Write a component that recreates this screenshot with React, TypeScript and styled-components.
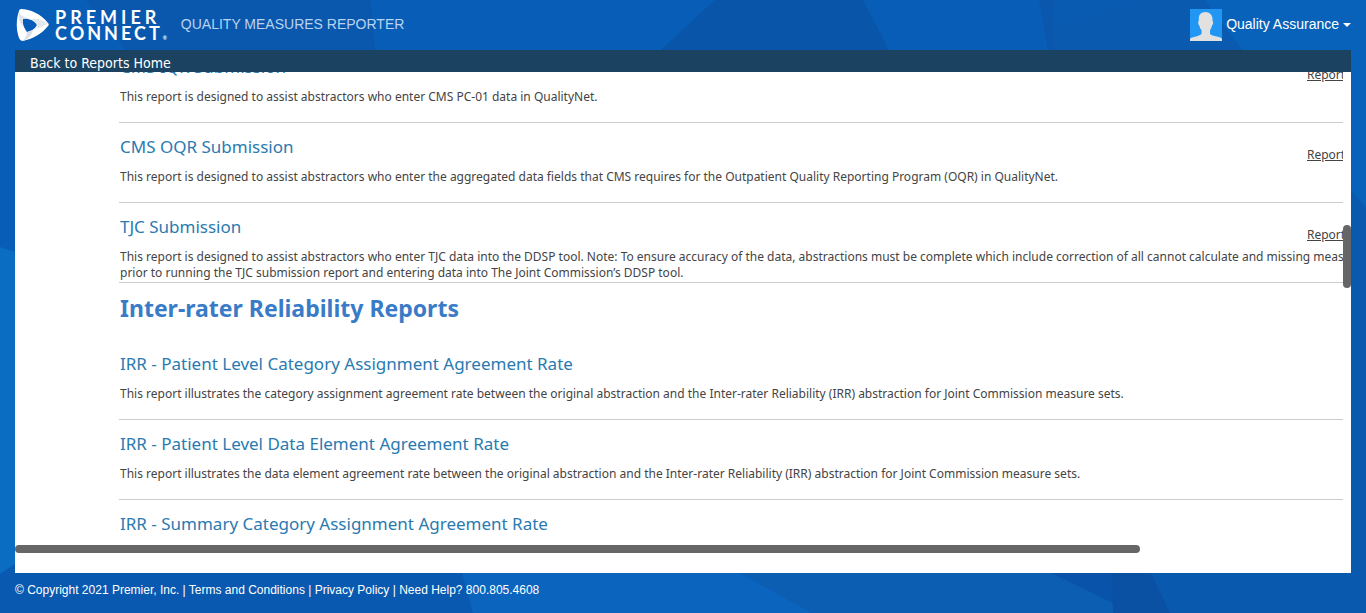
import React from "react";
import styled, { createGlobalStyle } from "styled-components";

const tahoma = `Tahoma, "Noto Sans", sans-serif`;
const arial = `Arial, "Liberation Sans", sans-serif`;

const GlobalStyle = createGlobalStyle`
  *, *::before, *::after { box-sizing: border-box; }
  body { margin: 0; background: #095db6; font-family: ${arial}; }
  h1, h2, h3, p, ul { margin: 0; padding: 0; }
`;

const Page = styled.div`
  position: relative;
  display: flex;
  flex-direction: column;
  height: 100vh;
  min-height: 300px;
  overflow: hidden;
`;

const Backdrop = styled.svg`
  position: absolute;
  inset: 0;
  z-index: -1;
  width: 100%;
  height: 100%;
`;

const Header = styled.header`
  display: flex;
  align-items: center;
  justify-content: space-between;
  height: 50px;
  flex: none;
  padding: 0 15px 0 16px;
`;

const Brand = styled.div`
  display: flex;
  align-items: center;
  gap: 14px;
`;

const Logo = styled.a`
  display: flex;
  align-items: center;
  gap: 6px;
  color: #fff;
  text-decoration: none;
`;

const Wordmark = styled.span`
  display: flex;
  flex-direction: column;
  font: 700 18px/16px Lato, sans-serif;
`;

const WordmarkLine = styled.span<{ $tracking: number }>`
  letter-spacing: ${(p) => p.$tracking}px;
`;

const Registered = styled.small`
  font-size: 5px;
  line-height: 5px;
  letter-spacing: 0;
`;

const AppName = styled.h1`
  padding-bottom: 2px;
  color: #b9d3ee;
  font: 400 14px/20px ${arial};
`;

const UserButton = styled.button`
  display: flex;
  align-items: center;
  gap: 4px;
  padding: 0;
  border: 0;
  background: none;
  color: #fff;
  font: 400 14px/20px ${arial};
  cursor: pointer;
`;

const UserName = styled.span`
  padding-bottom: 2px;
`;

const Caret = styled.span`
  border: 4px solid transparent;
  border-top-color: #fff;
  border-bottom: 0;
`;

const Panel = styled.main`
  display: flex;
  flex-direction: column;
  flex: 1;
  min-height: 0;
  margin: 0 15px;
  padding-bottom: 20px;
  background: #fff;
`;

const BackBar = styled.nav`
  display: flex;
  align-items: flex-end;
  flex: none;
  height: 22px;
  padding: 0 15px;
  background: #1c4262;
`;

const BackLink = styled.a`
  color: #fff;
  font: 400 14px/18px Tahoma, "DejaVu Sans Condensed", sans-serif;
  text-decoration: none;
`;

const ScrollArea = styled.div`
  display: flex;
  flex: 1;
  min-height: 0;
`;

const Viewport = styled.div`
  flex: 1;
  min-width: 0;
  overflow: hidden;
`;

const Content = styled.div`
  width: calc(100% + 239px);
  margin-top: -29px;
  padding-left: 104px;
  font-family: ${tahoma};
`;

const SectionTitle = styled.h2`
  padding: 9px 1px 16px;
  color: #3a7bc8;
  font: 700 23px/32px ${tahoma};
`;

const Row = styled.li`
  display: grid;
  grid-template-columns: minmax(0, 1fr) 275px;
  grid-template-rows: 27px auto;
  row-gap: 6px;
  align-content: start;
  min-height: 80px;
  padding: 13px 0 0 1px;
  border-bottom: 1px solid #ccc;
  list-style: none;
`;

const RowTitle = styled.h3`
  color: #2a7ab0;
  font: 400 17px/22px ${tahoma};
`;

const ReportLink = styled.a`
  align-self: end;
  justify-self: start;
  color: #444;
  font-size: 12px;
  line-height: 16px;
`;

const Description = styled.p`
  grid-column: 1 / -1;
  color: #444;
  font-size: 12px;
  line-height: 16px;
  white-space: pre-line;
`;

const VerticalTrack = styled.div`
  flex: none;
  width: 8px;
`;

const HorizontalTrack = styled.div`
  flex: none;
  height: 8px;
`;

const VerticalThumb = styled.div`
  height: 63px;
  margin-top: 153px;
  border-radius: 4px;
  background: #666;
`;

const HorizontalThumb = styled.div`
  width: calc(100% - 211px);
  height: 8px;
  border-radius: 4px;
  background: #666;
`;

const Footer = styled.footer`
  flex: none;
  height: 40px;
  padding: 9px 15px;
  color: #fff;
  font: 400 12px/16px ${arial};
`;

const FooterLink = styled.a`
  color: inherit;
  text-decoration: none;
`;

type Report = { title: string; text: string };

const submissionReports: Report[] = [
  {
    title: "CMS IQR Submission",
    text: "This report is designed to assist abstractors who enter CMS PC-01 data in QualityNet.",
  },
  {
    title: "CMS OQR Submission",
    text: "This report is designed to assist abstractors who enter the aggregated data fields that CMS requires for the Outpatient Quality Reporting Program (OQR) in QualityNet.",
  },
  {
    title: "TJC Submission",
    text: "This report is designed to assist abstractors who enter TJC data into the DDSP tool. Note: To ensure accuracy of the data, abstractions must be complete which include correction of all cannot calculate and missing measures\nprior to running the TJC submission report and entering data into The Joint Commission’s DDSP tool.",
  },
];

const reliabilityReports: Report[] = [
  {
    title: "IRR - Patient Level Category Assignment Agreement Rate",
    text: "This report illustrates the category assignment agreement rate between the original abstraction and the Inter-rater Reliability (IRR) abstraction for Joint Commission measure sets.",
  },
  {
    title: "IRR - Patient Level Data Element Agreement Rate",
    text: "This report illustrates the data element agreement rate between the original abstraction and the Inter-rater Reliability (IRR) abstraction for Joint Commission measure sets.",
  },
  { title: "IRR - Summary Category Assignment Agreement Rate", text: "" },
];

function ReportList({ reports, linked }: { reports: Report[]; linked?: boolean }) {
  return (
    <ul>
      {reports.map((report) => (
        <Row key={report.title}>
          <RowTitle>{report.title}</RowTitle>
          {linked ? <ReportLink href="#report">Report</ReportLink> : <span />}
          {report.text && <Description>{report.text}</Description>}
        </Row>
      ))}
    </ul>
  );
}

function Facets() {
  return (
    <Backdrop viewBox="0 0 1366 613" preserveAspectRatio="none" aria-hidden="true">
      <rect width="1366" height="613" fill="#085db6" />
      <path d="M86 0H371L375 50H126Z" fill="#0a58ae" />
      <path d="M715 0H863L889 50H661Z" fill="#0955a9" />
      <path d="M1039 0H1054V50H1048Z" fill="#0a57ad" />
      <path d="M1054 0H1205L1242 50H1054Z" fill="#095bb2" />
      <path d="M1054 28L1140 0H1205L1242 50H1054Z" fill="#0a5ab0" />
      <path d="M1205 0H1366V208L1351 190L1242 50Z" fill="#0862ba" />
      <path d="M1351 190L1366 208V613H1351Z" fill="#0959af" />
      <path d="M0 247L15 252V564L0 574Z" fill="#0b6dc2" />
      <path d="M0 574L15 564V573H462L473 613H0Z" fill="#0959b1" />
      <path d="M462 573H740L812 613H473Z" fill="#0b65bf" />
      <path d="M740 573H1051L1133 613H812Z" fill="#0b5eb2" />
      <path d="M1051 573H1112L1113 603Z" fill="#0954aa" />
      <path d="M1112 573H1151L1170 613H1113Z" fill="#0a50a3" />
      <path d="M1151 573H1366V613H1170Z" fill="#0959af" />
    </Backdrop>
  );
}

function PremierMark() {
  return (
    <svg width="33" height="34" viewBox="0 0 33 34" aria-hidden="true">
      <path
        fillRule="evenodd"
        fill="#fff"
        d="M5 1C14 1 25 6 32 15C33 16 33 17 32 18C26 26 16 31 7 33C5 33 4 32 3 30C0 22 0 11 3 3C3 2 4 1 5 1ZM7 11C6 15 8 20 11 24C15 23 19 21 21 17C18 12 12 10 7 11Z"
      />
      <path d="M3 4C5 8 9 10 14 10C11 10 9 10 7 11C6 14 6 17 7 19C3 14 2 9 3 4Z" fill="#e0e5eb" />
      <path d="M32 16C28 17 24 20 20 21C21 20 22 18 21 17C20 14 17 12 15 11C22 10 28 12 32 16Z" fill="#e4e8ed" />
      <path d="M6 33C9 31 11 28 11 24C13 24 15 23 17 22C16 27 12 32 6 33Z" fill="#d9e0e8" />
    </svg>
  );
}

function Avatar() {
  return (
    <svg width="32" height="32" viewBox="0 0 32 32" aria-hidden="true">
      <rect width="32" height="32" fill="#2196f3" />
      <path
        d="M15.500 3C19.500 3 22.500 6 22.500 10V12C23.500 12 23.300 15.500 22 16.500C21.500 19 20.500 20.500 20 21V25C22 27.500 32 27.500 32 30V32H0V30C0 28 9.500 27.500 11.500 25V21C10.500 20 9.800 18.500 9.300 16.500C8 15.500 7.800 12 8.800 12V10C8.500 6 11 3 15.500 3Z"
        fill="#e1e1e1"
      />
    </svg>
  );
}

export default function App() {
  return (
    <>
      <GlobalStyle />
      <Page>
        <Facets />
        <Header>
          <Brand>
            <Logo href="#home">
              <PremierMark />
              <Wordmark>
                <WordmarkLine $tracking={4}>PREMIER</WordmarkLine>
                <WordmarkLine $tracking={3}>
                  CONNECT<Registered>®</Registered>
                </WordmarkLine>
              </Wordmark>
            </Logo>
            <AppName>QUALITY MEASURES REPORTER</AppName>
          </Brand>
          <UserButton type="button">
            <Avatar />
            <UserName>Quality Assurance</UserName>
            <Caret />
          </UserButton>
        </Header>
        <Panel>
          <BackBar>
            <BackLink href="#reports">Back to Reports Home</BackLink>
          </BackBar>
          <ScrollArea>
            <Viewport>
              <Content>
                <ReportList reports={submissionReports} linked />
                <SectionTitle>Inter-rater Reliability Reports</SectionTitle>
                <ReportList reports={reliabilityReports} />
              </Content>
            </Viewport>
            <VerticalTrack>
              <VerticalThumb />
            </VerticalTrack>
          </ScrollArea>
          <HorizontalTrack>
            <HorizontalThumb />
          </HorizontalTrack>
        </Panel>
        <Footer>
          © Copyright 2021 Premier, Inc. | <FooterLink href="#terms">Terms and Conditions</FooterLink> |{" "}
          <FooterLink href="#privacy">Privacy Policy</FooterLink> | Need Help? 800.805.4608
        </Footer>
      </Page>
    </>
  );
}
